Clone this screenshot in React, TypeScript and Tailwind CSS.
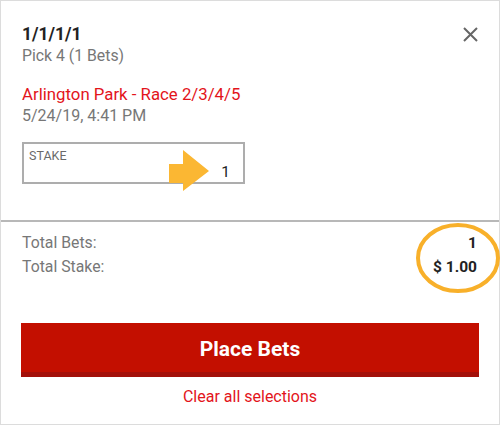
import React from 'react';

const font = { fontFamily: 'Roboto, "Liberation Sans", sans-serif' };

function CloseIcon() {
  return (
    <svg width="15" height="15" viewBox="0 0 15 15" className="mt-[3px]">
      <path d="M1 1 L14 14 M14 1 L1 14" stroke="#666" strokeWidth="2" fill="none" />
    </svg>
  );
}

export default function App() {
  return (
    <div className="relative w-[500px] h-[425px] bg-white border border-[#dcdcdc] flex flex-col" style={font}>
      {/* bet details */}
      <div className="pl-[21px] pr-[21px] pt-[23px]">
        <div className="flex justify-between items-start">
          <div className="text-[17.5px] leading-[21px] font-bold text-[#222]">1/1/1/1</div>
          <CloseIcon />
        </div>
        <div className="text-[15.8px] leading-[22px] text-[#777]">Pick 4 (1 Bets)</div>
        <div className="mt-[16px] text-[16.8px] leading-[22px] text-[#e3141b]">Arlington Park - Race 2/3/4/5</div>
        <div className="text-[16px] leading-[22px] text-[#777]">5/24/19, 4:41 PM</div>

        <div className="mt-[15px] w-[223px] h-[42px] border-2 border-[#adadad] flex flex-col px-[5px] pt-[5px]">
          <div className="text-[12.5px] leading-[13px] text-[#6a6a6a]">STAKE</div>
          <div className="self-end text-[15.5px] leading-[16px] text-[#222] pr-[8px] mt-[2px]">1</div>
        </div>
      </div>

      <div className="mt-[36px] h-[2px] bg-[#b8b8b8]" />

      {/* totals */}
      <div className="pl-[21px] pr-[22px] pt-[9px] text-[15.8px] leading-[24px]">
        <div className="flex justify-between">
          <span className="text-[#777]">Total Bets:</span>
          <span className="font-bold text-[#222] text-[15.5px]">1</span>
        </div>
        <div className="flex justify-between">
          <span className="text-[#777]">Total Stake:</span>
          <span className="font-bold text-[#222] text-[15.5px]">$ 1.00</span>
        </div>
      </div>

      <div className="px-[20px] mt-[44px]">
        <button className="w-full h-[54px] bg-[#c30f00] border-b-[5px] border-[#a3100a] text-white text-[21px] font-bold flex items-center justify-center pt-[5px]">
          Place Bets
        </button>
      </div>
      <div className="mt-[10px] text-center text-[16px] leading-[20px] text-[#e3141b]">Clear all selections</div>

      {/* annotations */}
      <svg className="absolute left-[168px] top-[149px]" width="42" height="42" viewBox="0 0 42 42">
        <polygon points="0,14 14,14 14,0 40,21 14,41 14,33 0,33" fill="#fbb733" />
      </svg>
      <svg className="absolute left-[412px] top-[219px]" width="90" height="76" viewBox="0 0 90 76">
        <ellipse cx="45" cy="38" rx="40" ry="33" fill="none" stroke="#f8b02a" strokeWidth="4" />
      </svg>
    </div>
  );
}
